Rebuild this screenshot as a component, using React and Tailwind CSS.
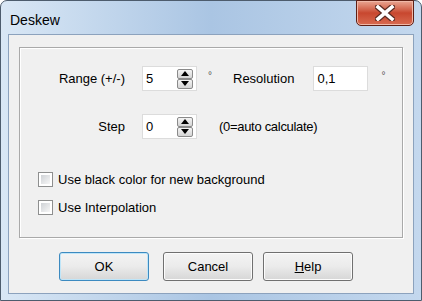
const Spinner = () => (
  <div className="flex flex-col ml-auto mr-[3px]">
    <div className="w-[16px] h-[10px] rounded-[2px] border border-[#8a8a8a] bg-gradient-to-b from-[#f4f4f4] to-[#d4d4d4] flex items-center justify-center">
      <svg width="8" height="5" viewBox="0 0 8 5"><path d="M0 5 L4 0 L8 5 Z" fill="#000" /></svg>
    </div>
    <div className="w-[16px] h-[10px] rounded-[2px] border border-[#8a8a8a] bg-gradient-to-b from-[#f4f4f4] to-[#d4d4d4] flex items-center justify-center">
      <svg width="8" height="5" viewBox="0 0 8 5"><path d="M0 0 L4 5 L8 0 Z" fill="#000" /></svg>
    </div>
  </div>
);

const Field = ({ value, spin }) => (
  <div className="w-[55px] h-[25px] bg-white border border-[#dcdcdc] flex items-center pl-[3px]">
    <span>{value}</span>
    {spin && <Spinner />}
  </div>
);

const Check = ({ label }) => (
  <label className="flex items-center leading-[15px]">
    <span className="w-[15px] h-[15px] border border-[#8e8f8f] bg-white p-[2px] flex">
      <span className="flex-1 bg-gradient-to-br from-[#cfd2d6] to-[#f7f7f7]" />
    </span>
    <span className="ml-[5px]">{label}</span>
  </label>
);

const Btn = ({ children, focus, className = '' }) => (
  <button
    className={`w-[90px] h-[29px] rounded-[3px] border bg-gradient-to-b from-[#f4f4f4] via-[#ebebeb] to-[#d6d6d6] flex items-center justify-center ${focus ? 'border-[#3c8ac0] shadow-[inset_0_0_0_1px_#bfe5f8]' : 'border-[#707070] shadow-[inset_0_0_0_1px_#fcfcfc]'} ${className}`}
  >
    {children}
  </button>
);

export default function App() {
  return (
    <div
      className="w-[422px] h-[301px] border border-[#4d5c6d] rounded-t-[7px] bg-gradient-to-r from-[#d9e7f5] via-[#aac5e3] to-[#c4d8ee] flex flex-col text-black"
      style={{ fontFamily: "'Liberation Sans', Arial, sans-serif" }}
    >
      {/* title bar */}
      <div className="h-[33px] flex items-start">
        <span className="text-[14px] ml-[9px] mt-[9px]">Deskew</span>
        <div className="ml-auto mr-[7px] mt-[-1px] w-[58px] h-[26px] rounded-b-[5px] border border-[#5f1f14] bg-gradient-to-b from-[#e9a592] via-[#c8472f] to-[#d86a50] flex items-center justify-center shadow-[inset_0_0_0_1px_#f0b8a8]">
          <svg width="20" height="16" viewBox="0 0 20 16">
            <path d="M3 2 L17 14 M17 2 L3 14" stroke="#5b2a22" strokeWidth="6" strokeLinecap="square" />
            <path d="M3 2 L17 14 M17 2 L3 14" stroke="#fff" strokeWidth="3.6" strokeLinecap="square" />
          </svg>
        </div>
      </div>

      {/* client */}
      <div className="mx-[7px] mb-[6px] flex-1 border border-[#8ca2bd] bg-[#f0f0f0] text-[13px] flex flex-col">
        <div className="mx-[10px] mt-[12px] h-[191px] border border-[#a9a9a9] shadow-[inset_1px_1px_0_#fff,1px_1px_0_#fff] flex flex-col">
          <div className="flex items-center mt-[18px]">
            <span className="w-[105px] text-right">Range (+/-)</span>
            <div className="ml-[17px]"><Field value="5" spin /></div>
            <span className="ml-[11px] text-[10px] text-[#555] -mt-[6px]">°</span>
            <span className="ml-[21px]">Resolution</span>
            <div className="ml-[19px]"><Field value="0,1" /></div>
            <span className="ml-[13px] text-[10px] text-[#555] -mt-[6px]">°</span>
          </div>
          <div className="flex items-center mt-[23px]">
            <span className="w-[105px] text-right">Step</span>
            <div className="ml-[17px]"><Field value="0" spin /></div>
            <span className="ml-[22px] tracking-[-0.3px]">(0=auto calculate)</span>
          </div>
          <div className="flex flex-col gap-[13px] ml-[18px] mt-[33px]">
            <Check label="Use black color for new background" />
            <Check label="Use Interpolation" />
          </div>
        </div>
        <div className="flex mt-[14px] ml-[50px]">
          <Btn focus>OK</Btn>
          <Btn className="ml-[14px]">Cancel</Btn>
          <Btn className="ml-[10px]"><span><span className="underline">H</span>elp</span></Btn>
        </div>
      </div>
    </div>
  );
}
